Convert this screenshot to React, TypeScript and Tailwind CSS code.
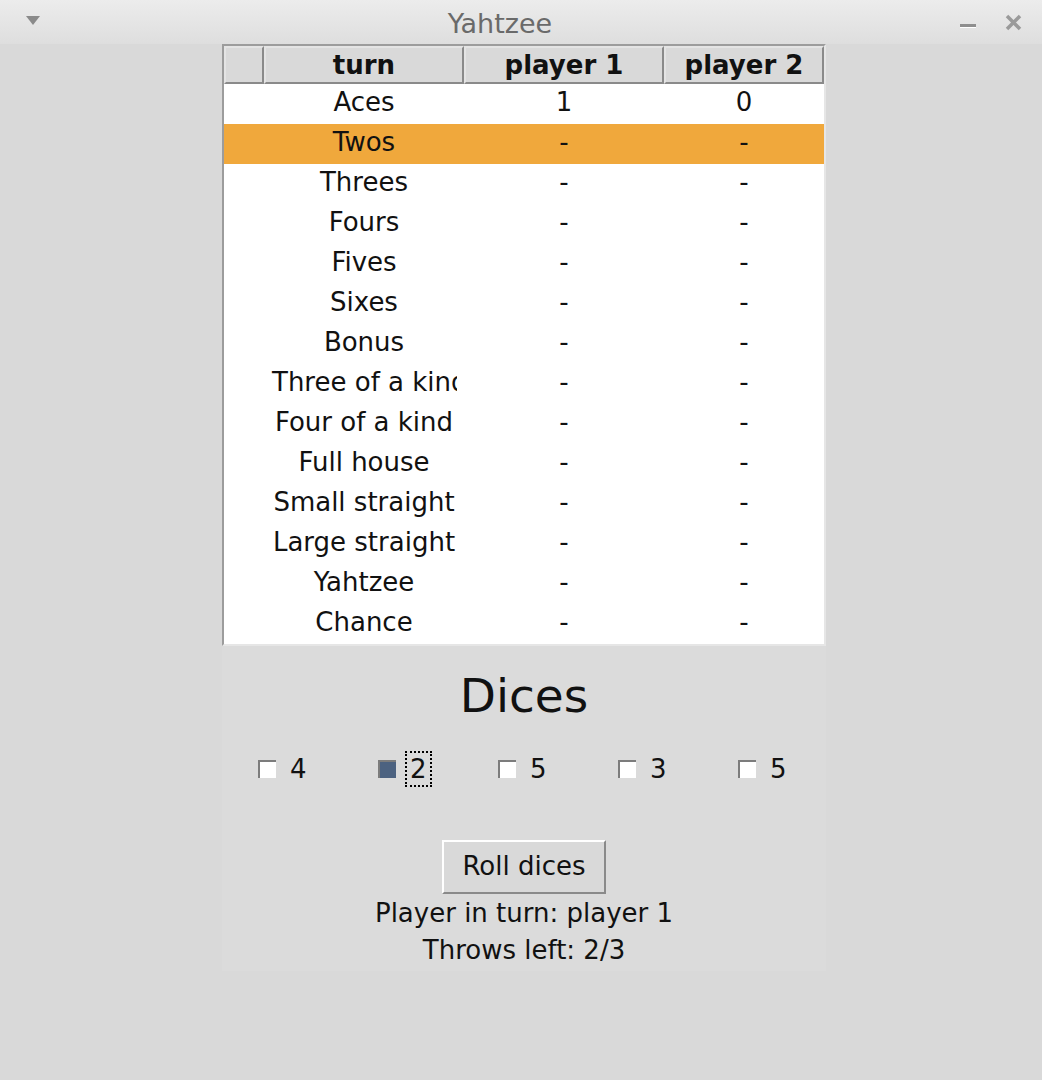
const rows: [string, string, string][] = [
  ['Aces', '1', '0'],
  ['Twos', '-', '-'],
  ['Threes', '-', '-'],
  ['Fours', '-', '-'],
  ['Fives', '-', '-'],
  ['Sixes', '-', '-'],
  ['Bonus', '-', '-'],
  ['Three of a kind', '-', '-'],
  ['Four of a kind', '-', '-'],
  ['Full house', '-', '-'],
  ['Small straight', '-', '-'],
  ['Large straight', '-', '-'],
  ['Yahtzee', '-', '-'],
  ['Chance', '-', '-'],
];

const dice = [
  { value: 4, held: false },
  { value: 2, held: true },
  { value: 5, held: false },
  { value: 3, held: false },
  { value: 5, held: false },
];

function HeaderCell({ label, width }: { label: string; width: string }) {
  return (
    <div
      className={`${width} h-full flex items-center justify-center border-t-2 border-l-2 border-t-[#e4e4e4] border-l-[#e4e4e4] border-r-2 border-b-2 border-r-[#8a8a8a] border-b-[#8a8a8a] bg-[#d9d9d9] font-bold`}
    >
      {label}
    </div>
  );
}

function DieToggle({ value, held, focused }: { value: number; held: boolean; focused?: boolean }) {
  return (
    <div className="w-[120px] flex items-center h-[36px]">
      <div
        className={`w-[18px] h-[18px] border-t-2 border-l-2 border-[#7c7c7c] ${held ? 'bg-[#4c6280]' : 'bg-white'}`}
      />
      <span
        className={`ml-[9px] px-[3px] leading-[32px] border-2 ${focused ? 'border-dotted border-black' : 'border-transparent'}`}
      >
        {value}
      </span>
    </div>
  );
}

export default function App() {
  return (
    <div className="w-[1042px] h-[1080px] bg-[#d9d9d9] text-[#111] text-[26px] font-['DejaVu_Sans','Liberation_Sans',sans-serif] overflow-hidden">
      {/* title bar */}
      <div className="h-[44px] flex items-center bg-gradient-to-b from-[#ececec] to-[#dedede] relative">
        <div className="absolute left-[26px] top-[16px] w-0 h-0 border-l-[7px] border-r-[7px] border-t-[9px] border-l-transparent border-r-transparent border-t-[#8a8a8a]" />
        <div className="flex-1 text-center pr-[42px] pt-[3px] text-[#6a6a6a] text-[27px] leading-[44px]">Yahtzee</div>
        <div className="absolute left-[960px] top-[24px] w-[16px] h-[4px] bg-[#8e8e8e] border-b border-white" />
        <svg className="absolute left-[1005px] top-[14px]" width="17" height="17" viewBox="0 0 17 17">
          <path d="M2 2 L15 15 M15 2 L2 15" stroke="#9a9a9a" strokeWidth="3.5" />
        </svg>
      </div>

      {/* score table */}
      <div className="ml-[222px] w-[604px] border-t-2 border-l-2 border-t-[#9c9c9c] border-l-[#9c9c9c] border-r-2 border-b-2 border-r-[#e6e6e6] border-b-[#e6e6e6] bg-white">
        <div className="flex h-[38px] bg-[#d9d9d9]">
          <HeaderCell label="" width="w-[40px]" />
          <HeaderCell label="turn" width="w-[200px]" />
          <HeaderCell label="player 1" width="w-[200px]" />
          <HeaderCell label="player 2" width="w-[160px]" />
        </div>
        {rows.map(([name, p1, p2]) => (
          <div
            key={name}
            className={`flex h-[40px] items-center pb-[4px] ${name === 'Twos' ? 'bg-[#f0a83c]' : ''}`}
          >
            <div className="w-[40px]" />
            {name.length > 14 ? (
              <div className="w-[200px] pl-[8px] whitespace-nowrap [clip-path:inset(0_7px_0_0)]">{name}</div>
            ) : (
              <div className="w-[200px] text-center whitespace-nowrap">{name}</div>
            )}
            <div className="w-[200px] text-center">{p1}</div>
            <div className="w-[160px] text-center">{p2}</div>
          </div>
        ))}
      </div>

      {/* dice panel */}
      <div className="ml-[222px] w-[604px] h-[325px] bg-[#dbdbdb] flex flex-col items-center">
        <div className="mt-[22px] text-[47px] leading-[56px]">Dices</div>
        <div className="mt-[27px] self-start pl-[36px] flex">
          {dice.map((d, i) => (
            <DieToggle key={i} value={d.value} held={d.held} focused={i === 1} />
          ))}
        </div>
        <button className="mt-[53px] w-[164px] h-[54px] pb-[2px] bg-[#d9d9d9] border-t-2 border-l-2 border-t-white border-l-white border-r-2 border-b-2 border-r-[#8a8a8a] border-b-[#8a8a8a]">
          Roll dices
        </button>
        <div className="leading-[37px] text-center pt-[1px]">
          <div>Player in turn: player 1</div>
          <div>Throws left: 2/3</div>
        </div>
      </div>
    </div>
  );
}
